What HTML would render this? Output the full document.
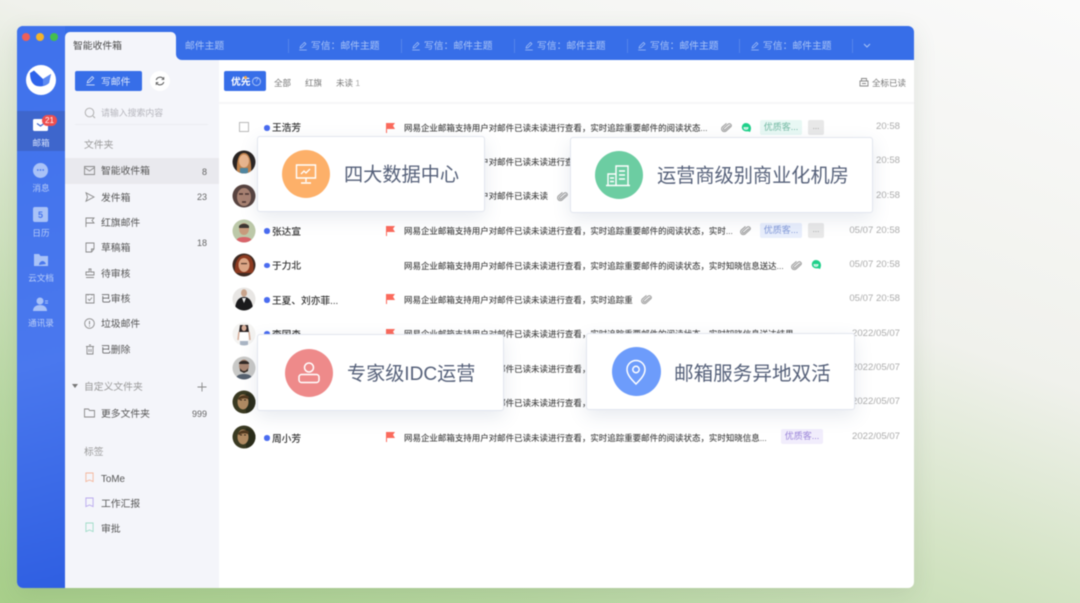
<!DOCTYPE html>
<html lang="zh"><head><meta charset="utf-8"><title>邮箱</title>
<style>
html,body{margin:0;padding:0;width:1080px;height:603px;overflow:hidden}
body{background:linear-gradient(200deg,#fafafa 0,#f0f1ec 39%,#d5e4c6 59%,#b9d8a3 80%,#a8cf8a 100%);font-family:"Liberation Sans","Noto Sans CJK SC",sans-serif;position:relative}
#root{position:absolute;left:0;top:0;width:1080px;height:603px;filter:blur(.45px)}
#root div,#root span.t,#root svg{position:absolute}
.t{white-space:nowrap;line-height:14px;height:14px}
.win{left:17px;top:26px;width:897px;height:562px;background:#fff;border-radius:6px;box-shadow:0 6px 24px rgba(60,80,60,.12)}
.top{left:17px;top:26px;width:897px;height:34px;background:#376ee8;border-radius:6px 6px 0 0}
.rail{left:17px;top:26px;width:48px;height:562px;background:linear-gradient(165deg,#3f72ec 0,#4a78ee 60%,#2f5fe2 100%);border-radius:6px 0 0 6px}
.side{left:65px;top:60px;width:154px;height:528px;background:#f4f5fa}
.tab{left:65px;top:32px;width:111px;height:28px;background:#f4f5fa;border-radius:5px 5px 0 0}
.tt{color:#a9c3f6;font-size:9.8px}
.sep{width:1px;height:14px;top:39px;background:#5584ea}
.rl{color:#b9cdf8;font-size:8.6px;width:48px;left:17px;text-align:center}
.si{left:101px;color:#555;font-size:9.8px}
.cnt{color:#666;font-size:9px;text-align:right;width:30px;left:177px}
.hd{color:#999;font-size:9.8px;left:84px}
.nm{left:272px;color:#333;font-size:9.7px;font-weight:500}
.dot{left:264px;width:5.500px;height:5.500px;border-radius:50%;background:#4a6cf0}
.pv{left:404px;color:#4a4a4a;font-size:8.47px;font-weight:500}
.tm{left:820px;width:80px;text-align:right;color:#adadad;font-size:9.6px}
.tag{height:15px;width:42px;border-radius:2px;font-size:9px;line-height:14px;text-align:center}
.more{left:808px;width:16px;height:15px;background:#e8e8e8;border-radius:2px;color:#999;font-size:8px;line-height:14px;text-align:center}
.card{background:#fff;border:1px solid #e2e6ef;border-radius:3px;box-shadow:0 6px 18px rgba(70,90,130,.13);box-sizing:border-box}
.c{width:48px;height:48px;border-radius:50%}
.ct{color:#56617a;font-size:19.2px;line-height:28px;height:28px;white-space:nowrap;position:absolute}
</style></head><body>
<svg width="0" height="0" style="position:absolute">
<defs>
<clipPath id="cp"><circle cx="12" cy="12" r="11.5"/></clipPath>
<symbol id="clip" viewBox="0 0 12 12"><path d="M9.6 3.2 5 8.6a1.2 1.2 0 0 1-1.9-1.5L7.6 1.9a2 2 0 0 1 3 2.5L6 9.9a3 3 0 0 1-4.6-3.8L5.4 1.6" transform="rotate(8 6 6)" fill="none" stroke="#a3a3a3" stroke-width="1.3"/></symbol>
<symbol id="wx" viewBox="0 0 12 12"><path d="M6 1a5 5 0 0 1 5 5c0 1.300-.4 3.100-1 4l-1.500-.6H6A4.200 4.200 0 1 1 6 1z" fill="#1fd08a"/><path d="M4 6.400c1 1.200 3 1.200 4 0" fill="none" stroke="#fff" stroke-width="1"/><rect x="3.500" y="5.200" width="5" height="1" fill="#fff"/></symbol>
<symbol id="flag" viewBox="0 0 11 11"><path d="M1 1h9L8 3.800 10 7H2v4H1z" fill="#fb6a5c"/></symbol>
<symbol id="pen" viewBox="0 0 12 12"><path d="M2.500 8.500 3 6.500 7.800 1.700l1.700 1.700L4.600 8.100zM1.500 10.800h9" fill="none" stroke="currentColor" stroke-width=".9"/></symbol>
<symbol id="bm" viewBox="0 0 10 12"><path d="M1 1h8v9.500L5 8.800 1 10.500z" fill="none" stroke="currentColor" stroke-width="1"/></symbol>
<symbol id="a1" viewBox="0 0 24 24"><g clip-path="url(#cp)"><rect width="24" height="24" fill="#2a2422"/><path d="M5 24C4 10 7 3 12 3s8 7 7 21z" fill="#c0824c"/><ellipse cx="12" cy="11" rx="5" ry="6.500" fill="#e8b58e"/><rect x="8" y="18" width="8" height="6" fill="#4f86a0"/></g></symbol>
<symbol id="a2" viewBox="0 0 24 24"><g clip-path="url(#cp)"><rect width="24" height="24" fill="#57433f"/><ellipse cx="12" cy="13" rx="7" ry="9" fill="#a88272"/><path d="M7 10h4M13 10h4M10 18h4" stroke="#4a3330" stroke-width="1.500"/></g></symbol>
<symbol id="a3" viewBox="0 0 24 24"><g clip-path="url(#cp)"><rect width="24" height="24" fill="#bcc8a8"/><ellipse cx="12" cy="10" rx="5" ry="6" fill="#c79a7c"/><path d="M7 7c2-3 8-3 10 0v2H7z" fill="#3c3632"/><path d="M3 24c1-5 5-6 9-6s8 1 9 6z" fill="#d8646a"/></g></symbol>
<symbol id="a4" viewBox="0 0 24 24"><g clip-path="url(#cp)"><rect width="24" height="24" fill="#3e2a22"/><path d="M3 20C2 8 7 2 13 2s10 6 8 18z" fill="#8c3a20"/><ellipse cx="12" cy="12" rx="5.500" ry="7" fill="#dba585"/><rect x="9" y="10" width="6" height="1.200" fill="#5a3a2c"/></g></symbol>
<symbol id="a5" viewBox="0 0 24 24"><g clip-path="url(#cp)"><rect width="24" height="24" fill="#e8e6e4"/><ellipse cx="12" cy="6" rx="3" ry="3.800" fill="#c9a48c"/><path d="M3 24c0-10 4-14 9-14s9 4 9 14z" fill="#1a1a1c"/><path d="M10 11h4l-2 5z" fill="#eee"/></g></symbol>
<symbol id="a6" viewBox="0 0 24 24"><g clip-path="url(#cp)"><rect width="24" height="24" fill="#f4f3f1"/><path d="M8 3h8l1 7H7z" fill="#2a2222"/><ellipse cx="12" cy="6" rx="2.500" ry="3" fill="#d6ad98"/><path d="M7 10h10l-1 10H8z" fill="#fff"/><path d="M7 10l-1 8M17 10l1 8" stroke="#d6ad98" stroke-width="1.500"/><rect x="8" y="19" width="8" height="5" fill="#aab5c4"/></g></symbol>
<symbol id="a7" viewBox="0 0 24 24"><g clip-path="url(#cp)"><rect width="24" height="24" fill="#c9c9c7"/><ellipse cx="12" cy="10" rx="5" ry="6.500" fill="#a98672"/><path d="M7 7c1-3 9-3 10 0v1H7zM8 12c2 4 6 4 8 0v3l-4 2-4-2z" fill="#332a26"/><path d="M3 24c1-5 5-6 9-6s8 1 9 6z" fill="#55606e"/></g></symbol>
<symbol id="a8" viewBox="0 0 24 24"><g clip-path="url(#cp)"><rect width="24" height="24" fill="#3a3a22"/><path d="M14 24V3c4 0 10 4 10 10v11z" fill="#2a2c1a"/><ellipse cx="11" cy="12" rx="5.500" ry="7.500" fill="#b08a62"/><path d="M6 9c1-4 9-5 11-2l-1 2c-3-1-6-1-9 1z" fill="#50381e"/><path d="M8 10h2M12 10h2" stroke="#3a2a1a" stroke-width="1"/></g></symbol>
</defs></svg>
<div id="root">
<div class="win"></div>
<div class="top"></div>
<div class="rail"></div>
<div class="side"></div>
<div style="left:219px;top:60px;width:695px;height:42px;background:#fff;border-bottom:2px solid #f6f6f7"></div>

<!-- traffic lights -->
<div style="left:22px;top:33px;width:8px;height:8px;border-radius:50%;background:#ee5f57"></div>
<div style="left:36px;top:33px;width:8px;height:8px;border-radius:50%;background:#f2b32c"></div>
<div style="left:50px;top:33px;width:8px;height:8px;border-radius:50%;background:#45bf4e"></div>

<!-- tabs -->
<div class="tab"></div>
<div style="left:176px;top:54px;width:6px;height:6px;background:#f4f5fa"></div>
<div style="left:176px;top:54px;width:6px;height:6px;background:#376ee8;border-radius:0 0 0 6px"></div>
<span class="t" style="left:73px;top:39.500px;color:#4a4a4a;font-size:9.8px">智能收件箱</span>
<span class="t tt" style="left:185px;top:39.500px">邮件主题</span>
<div class="sep" style="left:288px"></div><div class="sep" style="left:401px"></div><div class="sep" style="left:514px"></div><div class="sep" style="left:627px"></div><div class="sep" style="left:739px"></div><div class="sep" style="left:852px"></div>
<svg width="10" height="10" style="left:298px;top:41px;color:#a9c3f6"><use href="#pen"/></svg><span class="t tt" style="left:311px;top:39.500px">写信：邮件主题</span>
<svg width="10" height="10" style="left:411px;top:41px;color:#a9c3f6"><use href="#pen"/></svg><span class="t tt" style="left:424px;top:39.500px">写信：邮件主题</span>
<svg width="10" height="10" style="left:524px;top:41px;color:#a9c3f6"><use href="#pen"/></svg><span class="t tt" style="left:537px;top:39.500px">写信：邮件主题</span>
<svg width="10" height="10" style="left:637px;top:41px;color:#a9c3f6"><use href="#pen"/></svg><span class="t tt" style="left:650px;top:39.500px">写信：邮件主题</span>
<svg width="10" height="10" style="left:750px;top:41px;color:#a9c3f6"><use href="#pen"/></svg><span class="t tt" style="left:763px;top:39.500px">写信：邮件主题</span>
<svg width="8" height="6" viewBox="0 0 8 6" style="left:863px;top:43px"><path d="M1 1l3 3 3-3" fill="none" stroke="#a9c3f6" stroke-width="1"/></svg>

<!-- rail -->
<svg width="32" height="32" viewBox="0 0 32 32" style="left:24.500px;top:64px"><circle cx="16" cy="16" r="15" fill="#fff"/><path d="M5 9 9 6.500l9 8.500 8-5-2 9c-3 3-8 4-12 3-4-1-7-5-7-13z" fill="#2f63ea"/><path d="M18 15l8-5-2 9c-2 1.500-4 2-6 2.500z" fill="#5d8af2"/></svg>
<div style="left:17px;top:111px;width:48px;height:40px;background:#3e66cc"></div>
<div style="left:33px;top:119px;width:15px;height:12px;background:#fff;border-radius:1.500px"></div>
<svg width="15" height="12" viewBox="0 0 15 12" style="left:33px;top:119px"><path d="M4 4.500 7.500 7l3.500-2.500" fill="none" stroke="#3e66cc" stroke-width="1.200"/></svg>
<div style="left:42px;top:115px;width:15px;height:10.500px;background:#ee4f4f;border-radius:6px;color:#fff;font-size:8px;line-height:11px;text-align:center">21</div>
<span class="t rl" style="top:135.500px;color:#d5e0fa">邮箱</span>
<svg width="15" height="15" viewBox="0 0 15 15" style="left:33px;top:163px"><circle cx="7.500" cy="7.500" r="7.500" fill="#a9c2f7"/><circle cx="4.800" cy="7" r=".9" fill="#4a78ee"/><circle cx="7.500" cy="7" r=".9" fill="#4a78ee"/><circle cx="10.200" cy="7" r=".9" fill="#4a78ee"/></svg>
<span class="t rl" style="top:181px">消息</span>
<div style="left:33px;top:207px;width:15px;height:15px;border-radius:2px;background:#a9c2f7;color:#4a78ee;font-size:9px;font-weight:700;line-height:16px;text-align:center">5</div>
<span class="t rl" style="top:226px">日历</span>
<svg width="16" height="14" viewBox="0 0 16 14" style="left:32.500px;top:253px"><path d="M1 1h5l1.500 2H15v10H1z" fill="#a9c2f7"/><path d="M6 12c0-2 1-3 3-4 2 0 3 1 4 3z" fill="#4a78ee"/></svg>
<span class="t rl" style="top:271px">云文档</span>
<svg width="16" height="15" viewBox="0 0 16 15" style="left:33px;top:297px"><circle cx="7" cy="4" r="3.500" fill="#a9c2f7"/><path d="M0 14c0-4 3-6 7-6s7 2 7 6z" fill="#a9c2f7"/><path d="M12 4h3M12 6h3" stroke="#a9c2f7"/></svg>
<span class="t rl" style="top:316px">通讯录</span>

<!-- sidebar -->
<div style="left:75px;top:71px;width:67px;height:20px;background:#376ee8;border-radius:2px"></div>
<svg width="11" height="11" style="left:85px;top:75px;color:#dbe6fb"><use href="#pen"/></svg>
<span class="t" style="left:101px;top:75.500px;color:#dbe6fb;font-size:9.8px">写邮件</span>
<div style="left:150px;top:71px;width:20px;height:20px;background:#fff;border-radius:50%"></div>
<svg width="10" height="10" viewBox="0 0 10 10" style="left:155px;top:76px"><path d="M1.200 4A4 4 0 0 1 8.400 3M8.800 6A4 4 0 0 1 1.600 7" fill="none" stroke="#555" stroke-width="1"/><path d="M8.800 1v2.500H6.500M1.200 9V6.500h2.300" fill="none" stroke="#555" stroke-width=".8"/></svg>
<svg width="12" height="12" viewBox="0 0 12 12" style="left:84px;top:107px"><circle cx="5.500" cy="5.500" r="4.300" fill="none" stroke="#aaa" stroke-width=".9"/><path d="M9 9l2 2" stroke="#aaa"/></svg>
<span class="t" style="left:101px;top:106px;color:#b5b5bc;font-size:8.900px">请输入搜索内容</span>
<div style="left:75px;top:124px;width:133px;height:1px;background:#ecedf2"></div>
<span class="t hd" style="top:138.500px">文件夹</span>
<div style="left:65px;top:158px;width:154px;height:26px;background:#e9e9ee"></div>

<svg width="11" height="9" viewBox="0 0 11 9" style="left:84px;top:166px"><path d="M.5.500h10v8H.5zM.5 1.500l5 3.500 5-3.500" fill="none" stroke="#8a8a8a" stroke-width=".9"/></svg>
<span class="t si" style="top:164.500px">智能收件箱</span><span class="t cnt" style="top:165px">8</span>
<svg width="10" height="10" viewBox="0 0 10 10" style="left:85px;top:192px"><path d="M1 .800 9 5 1 9.200 2.500 5z" fill="none" stroke="#8a8a8a" stroke-width=".9"/></svg>
<span class="t si" style="top:191.500px">发件箱</span><span class="t cnt" style="top:190px">23</span>
<svg width="10" height="10" viewBox="0 0 10 10" style="left:85px;top:217px"><path d="M1 10V1h8L7 3.500 9 6H1" fill="none" stroke="#8a8a8a" stroke-width=".9"/></svg>
<span class="t si" style="top:216.500px">红旗邮件</span>
<svg width="10" height="11" viewBox="0 0 10 11" style="left:85px;top:242px"><path d="M1 1h8v6L6.500 10H1zM6.500 10V7H9" fill="none" stroke="#8a8a8a" stroke-width=".9"/></svg>
<span class="t si" style="top:242px">草稿箱</span><span class="t cnt" style="top:236px">18</span>
<svg width="10" height="11" viewBox="0 0 10 11" style="left:85px;top:268px"><path d="M4 1h2l-.3 3H9v3H1V4h3.300zM1 9.500h8" fill="none" stroke="#8a8a8a" stroke-width=".9"/></svg>
<span class="t si" style="top:267.500px">待审核</span>
<svg width="10" height="11" viewBox="0 0 10 11" style="left:85px;top:293px"><path d="M1 1.500h8V10H1zM3 1v1.500M7 1v1.500M3 6l1.500 1.500L7 4.500" fill="none" stroke="#8a8a8a" stroke-width=".9"/></svg>
<span class="t si" style="top:292.500px">已审核</span>
<svg width="11" height="11" viewBox="0 0 11 11" style="left:84px;top:318px"><circle cx="5.500" cy="5.500" r="4.800" fill="none" stroke="#8a8a8a" stroke-width=".9"/><path d="M5.500 3v3.500M5.500 7.500v1" stroke="#8a8a8a"/></svg>
<span class="t si" style="top:317.500px">垃圾邮件</span>
<svg width="10" height="11" viewBox="0 0 10 11" style="left:85px;top:344px"><path d="M2 2.500h6V10H2zM1 2.500h8M4 1h2M4 5v3M6 5v3" fill="none" stroke="#8a8a8a" stroke-width=".9"/></svg>
<span class="t si" style="top:343.500px">已删除</span>

<svg width="6" height="4" viewBox="0 0 6 4" style="left:72px;top:384px"><path d="M0 0h6L3 4z" fill="#777"/></svg>
<span class="t hd" style="top:380.500px">自定义文件夹</span>
<svg width="10" height="10" viewBox="0 0 10 10" style="left:196.500px;top:382px"><path d="M5 .500v9M.500 5h9" stroke="#888" stroke-width=".9"/></svg>
<svg width="11" height="10" viewBox="0 0 11 10" style="left:84px;top:408px"><path d="M.500 1h4l1 1.500h5V9H.5z" fill="none" stroke="#8a8a8a" stroke-width=".9"/></svg>
<span class="t si" style="top:407.500px">更多文件夹</span><span class="t cnt" style="top:407px">999</span>
<span class="t hd" style="top:445.500px">标签</span>
<svg width="9" height="11" style="left:85px;top:472px;color:#f4b79c"><use href="#bm"/></svg><span class="t si" style="top:472.500px">ToMe</span>
<svg width="9" height="11" style="left:85px;top:497px;color:#b9a9ee"><use href="#bm"/></svg><span class="t si" style="top:497.500px">工作汇报</span>
<svg width="9" height="11" style="left:85px;top:522px;color:#a0dcc8"><use href="#bm"/></svg><span class="t si" style="top:522.500px">审批</span>

<!-- list header -->
<div style="left:224px;top:71px;width:42px;height:20px;background:#376ee8;border-radius:2px"></div>
<span class="t" style="left:231px;top:75.500px;color:#fff;font-size:9.800px;font-weight:700">优先</span>
<div style="left:244px;top:76px;width:3px;height:3px;border-radius:50%;background:#f5a54a"></div>
<div style="left:252px;top:77px;width:7px;height:7px;border:1px solid #a9c3f6;border-radius:50%;color:#cfdcfa;font-size:6px;line-height:7px;text-align:center">?</div>
<span class="t" style="left:274px;top:75.500px;color:#777;font-size:8.500px">全部</span>
<span class="t" style="left:305px;top:75.500px;color:#777;font-size:8.500px">红旗</span>
<span class="t" style="left:336px;top:75.500px;color:#777;font-size:8.500px">未读 <span style="color:#aaa">1</span></span>
<svg width="10" height="10" viewBox="0 0 10 10" style="left:859px;top:77px"><path d="M1 4h8v5H1zM2.500 4V1.500h5V4M3 6.500h4" fill="none" stroke="#888" stroke-width=".9"/></svg>
<span class="t" style="left:872px;top:75.500px;color:#777;font-size:8.500px">全标已读</span>

<!-- rows -->
<div style="left:239px;top:122px;width:8px;height:8px;border:1px solid #bbb"></div>
<div class="dot" style="top:125px"></div><span class="t nm" style="top:122px">王浩芳</span>
<svg width="11" height="11" style="left:385px;top:122px"><use href="#flag"/></svg>
<span class="t pv" style="top:120.500px">网易企业邮箱支持用户对邮件已读未读进行查看，实时追踪重要邮件的阅读状态...</span>
<svg width="11" height="11" style="left:721px;top:122px"><use href="#clip"/></svg>
<svg width="12" height="12" style="left:740px;top:122px"><use href="#wx"/></svg>
<div class="tag" style="left:760px;top:120px;background:#e8f8f4;color:#72b8a2">优质客...</div><div class="more" style="top:120px">...</div>
<span class="t tm" style="top:120px">20:58</span>

<svg width="24" height="24" style="left:232px;top:150px"><use href="#a1"/></svg>
<span class="t pv" style="top:154.500px">网易企业邮箱支持用户对邮件已读未读进行查看，实时追踪重要邮件的阅读状态，实时知晓</span>
<span class="t tm" style="top:154px">20:58</span>

<svg width="24" height="24" style="left:232px;top:184px"><use href="#a2"/></svg>
<span class="t pv" style="top:188.500px">网易企业邮箱支持用户对邮件已读未读</span>
<svg width="11" height="11" style="left:557px;top:191px"><use href="#clip"/></svg>
<span class="t tm" style="top:188.500px">05/07 20:58</span>

<svg width="24" height="24" style="left:232px;top:219px"><use href="#a3"/></svg>
<div class="dot" style="top:228px"></div><span class="t nm" style="top:225.500px">张达宣</span>
<svg width="11" height="11" style="left:385px;top:225px"><use href="#flag"/></svg>
<span class="t pv" style="top:224px">网易企业邮箱支持用户对邮件已读未读进行查看，实时追踪重要邮件的阅读状态，实时...</span>
<svg width="11" height="11" style="left:740px;top:225px"><use href="#clip"/></svg>
<div class="tag" style="left:760px;top:223px;background:#e8eefc;color:#8098d8">优质客...</div><div class="more" style="top:223px">...</div>
<span class="t tm" style="top:223.500px">05/07 20:58</span>

<svg width="24" height="24" style="left:232px;top:253px"><use href="#a4"/></svg>
<div class="dot" style="top:262.500px"></div><span class="t nm" style="top:260px">于力北</span>
<span class="t pv" style="top:258.500px">网易企业邮箱支持用户对邮件已读未读进行查看，实时追踪重要邮件的阅读状态，实时知晓信息送达...</span>
<svg width="11" height="11" style="left:791px;top:260px"><use href="#clip"/></svg>
<svg width="12" height="12" style="left:810px;top:259px"><use href="#wx"/></svg>
<span class="t tm" style="top:257.500px">05/07 20:58</span>

<svg width="24" height="24" style="left:232px;top:287px"><use href="#a5"/></svg>
<div class="dot" style="top:297px"></div><span class="t nm" style="top:294.500px">王夏、刘亦菲...</span>
<svg width="11" height="11" style="left:385px;top:293px"><use href="#flag"/></svg>
<span class="t pv" style="top:292.500px">网易企业邮箱支持用户对邮件已读未读进行查看，实时追踪重</span>
<svg width="11" height="11" style="left:641px;top:294px"><use href="#clip"/></svg>
<span class="t tm" style="top:292px">05/07 20:58</span>

<svg width="24" height="24" style="left:232px;top:322px"><use href="#a6"/></svg>
<div class="dot" style="top:331px"></div><span class="t nm" style="top:328.500px">李国森</span>
<svg width="11" height="11" style="left:385px;top:328px"><use href="#flag"/></svg>
<span class="t pv" style="top:327px">网易企业邮箱支持用户对邮件已读未读进行查看，实时追踪重要邮件的阅读状态，实时知晓信息送达结果</span>
<span class="t tm" style="top:326.500px">2022/05/07</span>

<svg width="24" height="24" style="left:232px;top:356px"><use href="#a7"/></svg>
<span class="t pv" style="top:361.500px">网易企业邮箱支持用户对邮件已读未读进行查看，实时追踪重要</span>
<span class="t tm" style="top:361px">2022/05/07</span>

<svg width="24" height="24" style="left:232px;top:390px"><use href="#a8"/></svg>
<span class="t pv" style="top:396px">网易企业邮箱支持用户对邮件已读未读进行查看，实时追踪重要</span>
<span class="t tm" style="top:395px">2022/05/07</span>

<svg width="24" height="24" style="left:232px;top:425px"><use href="#a8"/></svg>
<div class="dot" style="top:435px"></div><span class="t nm" style="top:432.500px">周小芳</span>
<svg width="11" height="11" style="left:385px;top:431px"><use href="#flag"/></svg>
<span class="t pv" style="top:430.500px">网易企业邮箱支持用户对邮件已读未读进行查看，实时追踪重要邮件的阅读状态，实时知晓信息...</span>
<div class="tag" style="left:781px;top:429px;background:#f1edfc;color:#9a84d8">优质客...</div>
<span class="t tm" style="top:429.500px">2022/05/07</span>

<!-- cards -->
<div class="card" style="left:257px;top:136px;width:228px;height:76px"></div>
<div class="c" style="left:282px;top:150px;background:#fdb069"></div>
<svg width="22" height="22" viewBox="0 0 22 22" style="left:295px;top:163px"><path d="M1.500 2h19v13h-19zM11 15v4M6 20h10" fill="none" stroke="#fff" stroke-width="1.400"/><path d="M6 11l3-3 2 2 4-4" fill="none" stroke="#fff" stroke-width="1.300"/></svg>
<span class="ct" style="left:344px;top:162px">四大数据中心</span>

<div class="card" style="left:570px;top:137px;width:303px;height:76px"></div>
<div class="c" style="left:595px;top:151px;background:#6ccda2"></div>
<svg width="26" height="24" viewBox="0 0 26 24" style="left:605px;top:163px"><path d="M1 22.500h24M3 22V11h8M11 22V3h12v19M14 8h6M14 12h6M14 16h6M5 15h4M5 18.500h4" fill="none" stroke="#fff" stroke-width="1.400"/></svg>
<span class="ct" style="left:657px;top:163px">运营商级别商业化机房</span>

<div class="card" style="left:257px;top:334px;width:247px;height:77px"></div>
<div class="c" style="left:285px;top:349px;background:#ee8a8a"></div>
<svg width="24" height="24" viewBox="0 0 24 24" style="left:297px;top:361px"><circle cx="12" cy="6.500" r="4.500" fill="none" stroke="#fff" stroke-width="1.500"/><rect x="2" y="13.500" width="20" height="8" rx="2.500" fill="none" stroke="#fff" stroke-width="1.500"/></svg>
<span class="ct" style="left:347px;top:361px;font-size:19.100px">专家级IDC运营</span>

<div class="card" style="left:586px;top:333px;width:269px;height:77px"></div>
<div class="c" style="left:612px;top:347px;width:49px;height:49px;background:#6d9cfb"></div>
<svg width="22" height="26" viewBox="0 0 22 26" style="left:625px;top:359px"><path d="M11 25C7 21 2 16 2 10.500a9 9 0 0 1 18 0C20 16 15 21 11 25z" fill="none" stroke="#fff" stroke-width="1.500"/><circle cx="11" cy="10.500" r="3.200" fill="none" stroke="#fff" stroke-width="1.500"/></svg>
<span class="ct" style="left:674px;top:360px;font-size:19.600px">邮箱服务异地双活</span>
</div>
</body></html>
